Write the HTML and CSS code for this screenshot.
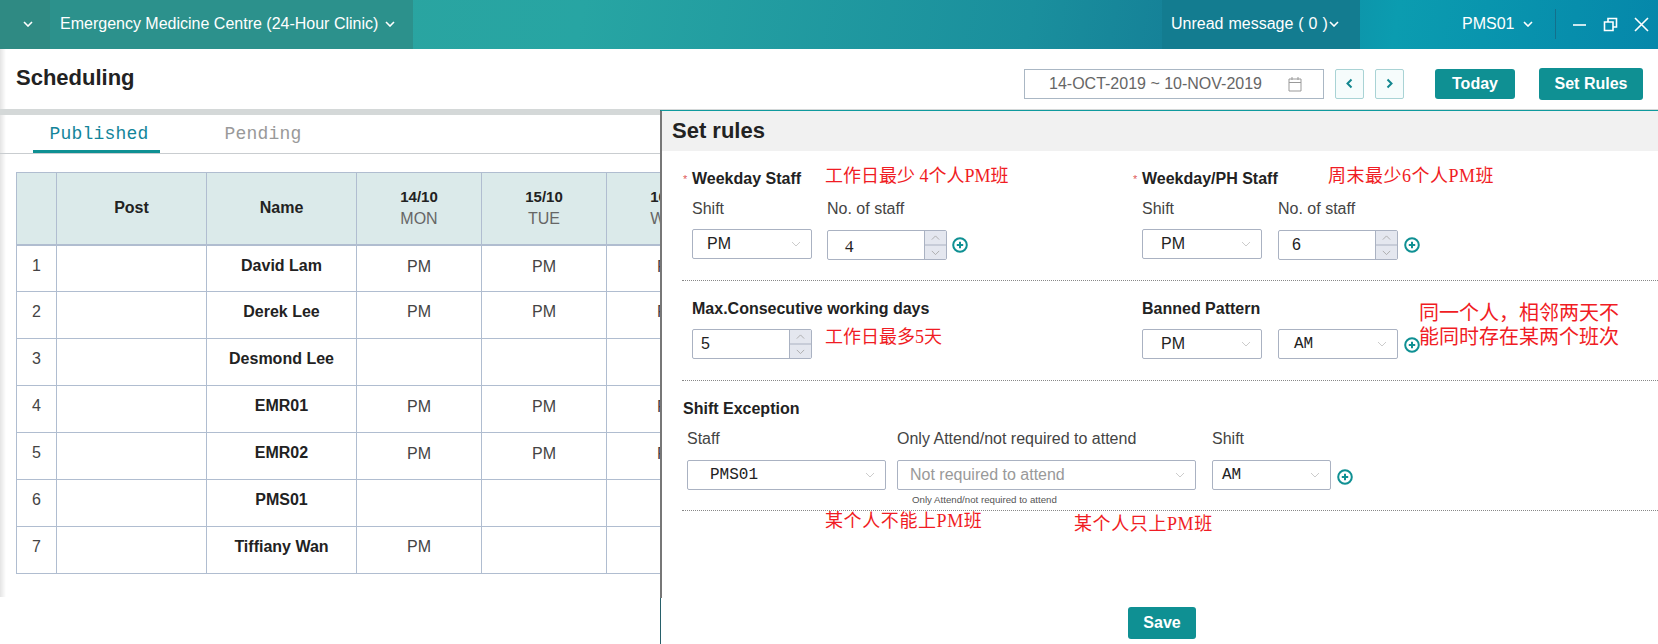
FILE: index.html
```html
<!DOCTYPE html>
<html>
	<head>
		<meta charset="utf-8">
		<title>Scheduling</title>
		<link rel="stylesheet" href="styles.css">
	</head>
	<body>
		<svg class="defs" width="0" height="0">
			<symbol id="chev" viewBox="0 0 10 6"><path d="M1 1l4 4 4-4"/></symbol>
			<symbol id="plus" viewBox="0 0 16 16"><circle cx="8" cy="8" r="6.8"/><path d="M8 4.8v6.4M4.8 8h6.4"/></symbol>
		</svg>
		<header class="topbar">
			<div class="seg seg-menu"><svg class="chev"><use href="#chev"/></svg></div>
			<div class="seg seg-clinic">Emergency Medicine Centre (24-Hour Clinic)<svg class="chev"><use href="#chev"/></svg></div>
			<div class="seg seg-unread">Unread message ( 0 )<svg class="chev"><use href="#chev"/></svg></div>
			<div class="seg seg-user">PMS01<svg class="chev"><use href="#chev"/></svg></div>
			<div class="win-icons">
				<svg width="15" height="15" viewBox="0 0 15 15"><path d="M1 8h13"/></svg>
				<svg width="15" height="15" viewBox="0 0 15 15"><path d="M1.5 5h8.500v8.500h-8.500zM5 5V1.500h8.500V10H10"/></svg>
				<svg width="15" height="15" viewBox="0 0 15 15"><path d="M1 1l13 13M14 1L1 14"/></svg>
			</div>
		</header>

		<div class="toolbar">
			<h1 class="page-title">Scheduling</h1>
			<div class="toolbar-right">
				<div class="date-range">
					<span>14-OCT-2019 ~ 10-NOV-2019</span>
					<svg width="14" height="16" viewBox="0 0 14 16"><path d="M1 3h12v12H1zM1 6.500h12M4 1v3M10 1v3"/></svg>
				</div>
				<button class="btn-nav"><svg width="7" height="11" viewBox="0 0 7 11"><path d="M5.500 1.500l-4 4 4 4"/></svg></button>
				<button class="btn-nav btn-next"><svg width="7" height="11" viewBox="0 0 7 11"><path d="M1.500 1.500l4 4-4 4"/></svg></button>
				<button class="btn btn-today">Today</button>
				<button class="btn btn-rules">Set Rules</button>
			</div>
		</div>
		<div class="band"></div>

		<div class="tabs">
			<div class="tab tab-on">Published</div>
			<div class="tab tab-off">Pending</div>
		</div>

		<table class="grid">
			<colgroup><col class="c-no"><col class="c-post"><col class="c-name"><col class="c-day"><col class="c-day"><col class="c-day"></colgroup>
			<thead>
				<tr>
					<th></th>
					<th>Post</th>
					<th>Name</th>
					<th class="day">14/10<span>MON</span></th>
					<th class="day">15/10<span>TUE</span></th>
					<th class="day">16/10<span>WED</span></th>
				</tr>
			</thead>
			<tbody>
				<tr><td>1</td><td></td><td class="name">David Lam</td><td class="low">PM</td><td class="low">PM</td><td class="low">PM</td></tr>
				<tr><td>2</td><td></td><td class="name">Derek Lee</td><td>PM</td><td>PM</td><td>PM</td></tr>
				<tr><td>3</td><td></td><td class="name">Desmond Lee</td><td></td><td></td><td></td></tr>
				<tr><td>4</td><td></td><td class="name">EMR01</td><td class="low">PM</td><td class="low">PM</td><td class="low">PM</td></tr>
				<tr><td>5</td><td></td><td class="name">EMR02</td><td class="low">PM</td><td class="low">PM</td><td class="low">PM</td></tr>
				<tr><td>6</td><td></td><td class="name">PMS01</td><td></td><td></td><td></td></tr>
				<tr><td>7</td><td></td><td class="name">Tiffiany Wan</td><td>PM</td><td></td><td></td></tr>
			</tbody>
		</table>

		<aside class="panel">
			<h2 class="panel-title">Set rules</h2>

			<section class="rule-sec rule-two">
				<div class="rule-col">
					<div class="rule-title"><i>*</i>Weekday Staff</div>
					<div class="field-labels"><span class="w-field">Shift</span><span>No. of staff</span></div>
					<div class="field-row">
						<div class="sel w-field"><span>PM</span><svg class="chev"><use href="#chev"/></svg></div>
						<div class="num w-field num-drop"><b class="serif">4</b><div class="spin"><svg class="chev up"><use href="#chev"/></svg><svg class="chev"><use href="#chev"/></svg></div></div>
						<svg class="plus"><use href="#plus"/></svg>
					</div>
				</div>
				<div class="rule-col">
					<div class="rule-title"><i>*</i>Weekday/PH Staff</div>
					<div class="field-labels"><span class="w-field">Shift</span><span>No. of staff</span></div>
					<div class="field-row">
						<div class="sel w-field"><span>PM</span><svg class="chev"><use href="#chev"/></svg></div>
						<div class="num w-field num-drop num-wide"><b>6</b><div class="spin"><svg class="chev up"><use href="#chev"/></svg><svg class="chev"><use href="#chev"/></svg></div></div>
						<svg class="plus"><use href="#plus"/></svg>
					</div>
				</div>
			</section>

			<section class="rule-sec rule-two">
				<div class="rule-col">
					<div class="rule-title rule-title-b">Max.Consecutive working days</div>
					<div class="field-row">
						<div class="num w-field"><b class="tight">5</b><div class="spin"><svg class="chev up"><use href="#chev"/></svg><svg class="chev"><use href="#chev"/></svg></div></div>
					</div>
				</div>
				<div class="rule-col">
					<div class="rule-title rule-title-b">Banned Pattern</div>
					<div class="field-row">
						<div class="sel w-field"><span>PM</span><svg class="chev"><use href="#chev"/></svg></div>
						<div class="sel w-field sel-am"><span class="mono">AM</span><svg class="chev"><use href="#chev"/></svg></div>
						<svg class="plus"><use href="#plus"/></svg>
					</div>
				</div>
			</section>

			<section class="rule-sec rule-exc">
				<div class="rule-title rule-title-b">Shift Exception</div>
				<div class="exc-labels"><span class="w-staff">Staff</span><span class="w-only">Only Attend/not required to attend</span><span>Shift</span></div>
				<div class="exc-row">
					<div class="sel w-staff"><span class="mono">PMS01</span><svg class="chev"><use href="#chev"/></svg></div>
					<div class="sel w-only sel-hint"><span>Not required to attend</span><svg class="chev"><use href="#chev"/></svg></div>
					<div class="sel w-shift"><span class="mono">AM</span><svg class="chev"><use href="#chev"/></svg></div>
					<svg class="plus"><use href="#plus"/></svg>
				</div>
				<div class="exc-note">Only Attend/not required to attend</div>
			</section>

			<div class="panel-foot"><button class="btn btn-save">Save</button></div>

			<div class="note n1">工作日最少 4个人PM班</div>
			<div class="note n2">周末最少6个人PM班</div>
			<div class="note n3">工作日最多5天</div>
			<div class="note n4">同一个人，相邻两天不<br>能同时存在某两个班次</div>
			<div class="note n5">某个人不能上PM班</div>
			<div class="note n6">某个人只上PM班</div>
		</aside>
	</body>
</html>
```

FILE: styles.css
```css
* {
	box-sizing: border-box;
}
html, body {
	height: 644px;
}
body {
	margin: 0;
	position: relative;
	overflow: hidden;
	background: #fff;
	color: #222;
	font-family: "Liberation Sans", Arial, sans-serif;
	font-size: 16px;
}
body::before {
	content: "";
	position: absolute;
	z-index: -1;
	left: 0;
	top: 49px;
	width: 6px;
	height: 548px;
	background: linear-gradient(to right, #e4e4e4, #fff);
}
.defs {
	position: absolute;
}
.chev {
	width: 10px;
	height: 6px;
	fill: none;
	stroke: #fff;
	stroke-width: 1.6;
}
.mono {
	font-family: "Liberation Mono", monospace;
	font-weight: normal;
}
.serif {
	position: relative;
	top: 2px;
	font-family: "Liberation Serif", serif;
	font-size: 17px;
}

/* top bar */
.topbar {
	display: flex;
	height: 49px;
	color: #fff;
	background: linear-gradient(100deg, #2fa39c 0%, #27a5a3 35%, #1a8f9d 62%, #147f97 72%, #0b9cb0 84%, #0587aa 100%);
}
.seg {
	display: flex;
	align-items: center;
	padding-bottom: 2px;
	white-space: nowrap;
}
.seg .chev {
	flex: none;
}
.seg-menu {
	width: 50px;
	padding-left: 23px;
	background: #2f8a83;
}
.seg-clinic {
	width: 363px;
	padding-left: 10px;
	background: #2c918c;
}
.seg-clinic .chev {
	margin-left: 7px;
}
.seg-unread {
	width: 198px;
	margin-left: 749px;
	padding-left: 9px;
	word-spacing: 0.5px;
	background: #137c90;
}
.seg-unread .chev {
	margin-left: 1px;
}
.seg-user {
	padding-left: 102px;
}
.seg-user .chev {
	margin-left: 9px;
}
.win-icons {
	display: flex;
	align-items: center;
	gap: 16px;
	margin-left: auto;
	margin-right: 9px;
	height: 30px;
	margin-top: 9px;
	padding-left: 16px;
	border-left: 1px solid #13708c;
}
.win-icons svg {
	fill: none;
	stroke: #fff;
	stroke-width: 1.600;
}

/* toolbar */
.toolbar {
	display: flex;
	height: 60px;
	padding: 14px 15px 0 16px;
}
.page-title {
	margin: 0;
	font-size: 22px;
	line-height: 30px;
	color: #222;
}
.toolbar-right {
	display: flex;
	margin-left: auto;
	margin-top: 6px;
}
.date-range {
	display: flex;
	align-items: center;
	width: 300px;
	height: 30px;
	padding-left: 24px;
	border: 1px solid #aab7c4;
	color: #666;
	font-size: 16px;
}
.date-range svg {
	margin-left: 26px;
	fill: none;
	stroke: #999;
}
.btn-nav {
	width: 29px;
	height: 30px;
	margin-left: 11px;
	padding: 0;
	background: #f6fcfc;
	border: 1px solid #a9d3d5;
	border-radius: 2px;
}
.btn-nav svg {
	fill: none;
	stroke: #13868f;
	stroke-width: 2;
}
.btn-next {
	margin-left: 11px;
}
.btn {
	border: 0;
	border-radius: 3px;
	background: #0f9093;
	color: #fff;
	font-family: "Liberation Sans", Arial, sans-serif;
	font-size: 16px;
	font-weight: bold;
}
.btn-today {
	width: 80px;
	height: 30px;
	margin-left: 31px;
}
.btn-rules {
	width: 104px;
	height: 32px;
	margin-left: 24px;
	margin-top: -1px;
}
.band {
	height: 6px;
	background: #d4d8d8;
}

/* tabs */
.tabs {
	display: flex;
	height: 39px;
	padding-left: 33px;
	border-bottom: 1px solid #c9cdd0;
}
.tab {
	height: 38px;
	font-family: "Liberation Mono", monospace;
	font-size: 18px;
	letter-spacing: 0.2px;
	line-height: 38px;
	text-align: center;
}
.tab-on {
	width: 127px;
	padding-left: 5px;
	color: #13859a;
	border-bottom: 3px solid #0f9093;
}
.tab-off {
	width: 78px;
	margin-left: 64px;
	color: #999;
}

/* schedule table */
.grid {
	margin: 18px 0 0 16px;
	width: 715px;
	table-layout: fixed;
	border-collapse: collapse;
	font-size: 16px;
}
.c-no {
	width: 40px;
}
.c-post, .c-name {
	width: 150px;
}
.c-day {
	width: 125px;
}
.grid th, .grid td {
	border: 1px solid #b0bdd0;
}
.grid th {
	height: 72px;
	background: #dbeaea;
	border-bottom-width: 2px;
	font-size: 16px;
	color: #222;
}
.grid th.day {
	font-size: 15px;
}
.grid th span {
	display: block;
	margin-top: 5px;
	font-size: 16px;
	font-weight: normal;
	color: #666;
}
.grid td {
	height: 47px;
	padding-top: 10px;
	line-height: 20px;
	vertical-align: top;
	text-align: center;
	color: #444;
}
.grid td.name {
	font-weight: bold;
	color: #222;
}
.grid td.low {
	padding-top: 11px;
}

/* set rules panel */
.panel {
	position: absolute;
	left: 660px;
	top: 110px;
	right: 0;
	bottom: 0;
	background: #fff;
	border-top: 1px solid #0f9a9e;
	border-left: 1px solid #27606a;
}
.panel::before {
	content: "";
	position: absolute;
	left: -1px;
	top: 0;
	width: 2px;
	height: 487px;
	background: #777;
}
.panel-title {
	margin: 0;
	height: 40px;
	padding-left: 11px;
	background: #f1f1f1;
	font-size: 22px;
	line-height: 40px;
	color: #222;
}
.rule-sec {
	margin-left: 21px;
	border-bottom: 1px dotted #888;
}
.rule-two {
	display: grid;
	grid-template-columns: 450px 1fr;
	height: 130px;
}
.rule-two + .rule-two {
	height: 100px;
}
.rule-col {
	padding-left: 10px;
}
.rule-title {
	position: relative;
	margin-top: 18px;
	height: 20px;
	font-size: 16px;
	font-weight: bold;
	line-height: 20px;
}
.rule-title i {
	position: absolute;
	left: -9px;
	font-style: normal;
	font-weight: normal;
	font-size: 11px;
	color: #e05a5a;
}
.rule-title-b {
	margin-bottom: 10px;
}
.field-labels {
	display: flex;
	gap: 15px;
	margin-top: 10px;
	margin-bottom: 10px;
	height: 20px;
	line-height: 20px;
	color: #444;
}
.field-row {
	display: flex;
	gap: 15px;
}
.rule-col + .rule-col .field-row, .rule-col + .rule-col .field-labels {
	gap: 16px;
}
.w-field {
	width: 120px;
}
.sel, .num {
	display: flex;
	align-items: center;
	height: 30px;
	background: #fff;
	border: 1px solid #aab2c2;
	border-radius: 2px;
}
.sel {
	justify-content: space-between;
	padding: 0 10px 0 14px;
}
.rule-col + .rule-col .sel {
	padding-left: 18px;
}
.rule-col + .rule-col .sel-am {
	padding-left: 15px;
}
.sel .chev {
	stroke: #ccc;
	stroke-width: 1;
	width: 10px;
}
.num {
	justify-content: space-between;
	padding-left: 17px;
}
.num b {
	font-weight: normal;
}
.num .tight {
	margin-left: -9px;
}
.num-drop {
	margin-top: 1px;
}
.spin {
	display: flex;
	flex-direction: column;
	width: 22px;
	height: 100%;
	background: #e4e7ef;
	border-left: 1px solid #aab2c2;
}
.spin .chev {
	flex: 1;
	width: 100%;
	stroke: #aaa;
	stroke-width: 1;
	padding: 4px 0;
}
.spin .up {
	transform: scaleY(-1);
	border-top: 1px solid #aab2c2;
}
.plus {
	width: 16px;
	height: 16px;
	margin: 8px 0 0 -10px;
	fill: none;
	stroke: #0f9093;
	stroke-width: 2;
}
.num-wide b {
	margin-left: -4px;
}
.rule-exc {
	height: 130px;
	padding-top: 18px;
}
.rule-exc .rule-title {
	margin-top: 0;
	padding-left: 1px;
}
.exc-labels {
	display: flex;
	margin: 9px 0 11px 5px;
	height: 20px;
	line-height: 20px;
	color: #444;
}
.exc-row {
	display: flex;
	margin-left: 5px;
}
.w-staff {
	width: 199px;
	margin-right: 11px;
	flex: none;
}
.w-only {
	width: 299px;
	margin-right: 16px;
	flex: none;
}
.w-shift {
	width: 119px;
	padding-left: 9px;
}
.rule-exc .w-staff {
	padding-left: 22px;
}
.exc-labels .w-staff {
	padding-left: 0;
}
.rule-exc .plus {
	margin-left: 6px;
	margin-top: 9px;
}
.sel-hint {
	color: #999;
	padding-left: 12px;
}
.exc-note {
	margin: 4px 0 0 230px;
	font-size: 9.700px;
	line-height: 12px;
	color: #555;
}
.panel-foot {
	display: flex;
	justify-content: center;
	padding: 96px 0 0 5px;
}
.btn-save {
	width: 68px;
	height: 32px;
}

/* red notes written over the form */
.note {
	position: absolute;
	font-family: "Liberation Serif", "Noto Sans CJK SC", serif;
	font-size: 18px;
	line-height: 24px;
	color: #f01c24;
	white-space: nowrap;
}
.n1 {
	left: 164px;
	top: 53px;
}
.n2 {
	left: 667px;
	top: 53px;
	letter-spacing: 0.5px;
}
.n3 {
	left: 164px;
	top: 214px;
}
.n4 {
	left: 758px;
	top: 190px;
	font-size: 20px;
	line-height: 24px;
}
.n5 {
	left: 164px;
	top: 398px;
	letter-spacing: 0.6px;
}
.n6 {
	left: 413px;
	top: 401px;
	letter-spacing: 0.6px;
}
```
